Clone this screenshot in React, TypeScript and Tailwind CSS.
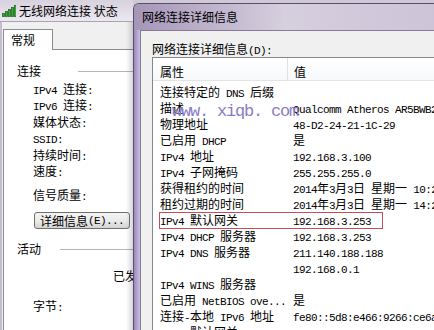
import React from "react";

type Row = [string, string];

const rows: Row[] = [
  ["连接特定的 DNS 后缀", ""],
  ["描述", "Qualcomm Atheros AR5BWB222 Wireless Network Adapter"],
  ["物理地址", "48-D2-24-21-1C-29"],
  ["已启用 DHCP", "是"],
  ["IPv4 地址", "192.168.3.100"],
  ["IPv4 子网掩码", "255.255.255.0"],
  ["获得租约的时间", "2014年3月3日 星期一 10:22:15"],
  ["租约过期的时间", "2014年3月3日 星期一 14:22:15"],
  ["IPv4 默认网关", "192.168.3.253"],
  ["IPv4 DHCP 服务器", "192.168.3.253"],
  ["IPv4 DNS 服务器", "211.140.188.188"],
  ["", "192.168.0.1"],
  ["IPv4 WINS 服务器", ""],
  ["已启用 NetBIOS ove...", "是"],
  ["连接-本地 IPv6 地址", "fe80::5d8:e466:9266:ce6a%11"],
  ["IPv6 默认网关", ""],
];

// ascii runs get a half-width mono face, like SimSun's latin glyphs
function Mix({ text }: { text: string }) {
  const parts = text.match(/[\x00-\x7f]+|[^\x00-\x7f]+/g) ?? [];
  return (
    <>
      {parts.map((p, i) =>
        /^[\x00-\x7f]/.test(p) ? (
          <span
            key={i}
            className="font-['Liberation_Mono',monospace] text-[11px] tracking-[-0.6px]"
          >
            {p}
          </span>
        ) : (
          <span key={i}>{p}</span>
        ),
      )}
    </>
  );
}

function Signal() {
  return (
    <svg width="14" height="13" viewBox="0 0 14 13">
      {[0, 1, 2, 3, 4].map((i) => (
        <rect
          key={i}
          x={i * 3 + 0.5}
          y={12.5 - (i * 2 + 3)}
          width="2"
          height={i * 2 + 3}
          fill="#3aa83a"
          stroke="#1d6a1d"
          strokeWidth="0.8"
        />
      ))}
    </svg>
  );
}

function LeftWindow() {
  return (
    <div className="relative flex w-[133px] shrink-0 flex-col overflow-hidden">
      <div className="flex h-[22px] items-center gap-[3px] border-b border-[#a8a2b2] bg-gradient-to-b from-[#d8d1de] to-[#ece8f0] pl-[2px]">
        <Signal />
        <span className="whitespace-nowrap text-[12px] leading-4 text-black">
          无线网络连接 状态
        </span>
      </div>
      <div className="flex flex-1 flex-col border-l-2 border-[#c4bccf] bg-[#f0f0f0] pt-[7px]">
        <div className="relative z-10 -mb-px ml-px flex h-[21px] w-[50px] items-center border border-b-0 border-[#898c95] bg-white pl-[7px] text-[12px] leading-4">
          常规
        </div>
        <div className="ml-px flex flex-1 flex-col border-l border-t border-[#898c95] bg-white text-[12px] leading-4 text-black">
          <div className="mt-[13px] flex h-4 items-center pl-[13px]">
            <span>连接</span>
            <div className="ml-[37px] h-px flex-1 bg-[#b4b4b4]" />
          </div>
          <div className="mt-[2px] h-4 whitespace-pre pl-[29px]">
            <Mix text="IPv4 连接:" />
          </div>
          <div className="h-4 whitespace-pre pl-[29px]">
            <Mix text="IPv6 连接:" />
          </div>
          <div className="mt-px h-4 whitespace-pre pl-[29px]">
            <Mix text="媒体状态:" />
          </div>
          <div className="h-4 whitespace-pre pl-[29px]">
            <Mix text="SSID:" />
          </div>
          <div className="mt-px h-4 whitespace-pre pl-[29px]">
            <Mix text="持续时间:" />
          </div>
          <div className="h-4 whitespace-pre pl-[29px]">
            <Mix text="速度:" />
          </div>
          <div className="mt-[8px] h-4 whitespace-pre pl-[29px]">
            <Mix text="信号质量:" />
          </div>
          <div className="ml-[30px] mt-[9px] flex h-[17px] w-[96px] items-center justify-center whitespace-pre rounded-[3px] border border-[#707070] bg-gradient-to-b from-[#f4f4f4] via-[#ebebeb] to-[#d4d4d4]">
            <Mix text="详细信息(E)..." />
          </div>
          <div className="mt-[12px] flex h-4 items-center pl-[13px]">
            <span>活动</span>
            <div className="ml-[19px] h-px flex-1 bg-[#b4b4b4]" />
          </div>
          <div className="mt-[11px] h-4 whitespace-nowrap pl-[109px]">已发送</div>
          <div className="mt-[14px] h-4 whitespace-pre pl-[29px]">
            <Mix text="字节:" />
          </div>
        </div>
      </div>
      <div className="absolute bottom-0 right-0 top-[22px] w-[7px] bg-gradient-to-r from-transparent to-[rgba(60,48,80,0.2)]" />
    </div>
  );
}

function DetailsWindow() {
  return (
    <div className="mt-[3px] flex min-w-0 flex-1 flex-col overflow-hidden rounded-tl-[6px] border-l border-t border-[#5a4e6c]">
      <div className="flex h-[26px] shrink-0 items-center bg-gradient-to-r from-[#a596b8] via-[#d6cfde] to-[#cdc4d8] pl-[8px]">
        <span className="whitespace-nowrap text-[12px] leading-4 text-black">
          网络连接详细信息
        </span>
      </div>
      <div className="flex flex-1">
        <div className="w-[6px] shrink-0 bg-gradient-to-r from-[#9a88bc] to-[#cbbfe0]" />
        <div className="flex min-w-0 flex-1 flex-col border-l border-t border-[#857b94] bg-[#f0f0f0] pl-[11px] pt-[10px]">
          <div className="h-4 whitespace-pre text-[12px] leading-4">
            <Mix text="网络连接详细信息(D):" />
          </div>
          <div className="relative flex-1 overflow-hidden border-l border-t border-[#828790] bg-white text-[12px] leading-4 text-black">
            <div className="flex h-[23px] border-b border-[#e2e3e6] bg-gradient-to-b from-white to-[#f7f8fa]">
              <div className="w-[135px] shrink-0 border-r border-[#e0e1e4] pl-[7px] pt-[6px]">属性</div>
              <div className="pl-[6px] pt-[6px]">值</div>
            </div>
            <div className="pt-[3px]">
              {rows.map(([k, v], i) => (
                <div key={i} className="flex h-4 whitespace-pre">
                  <div className="w-[135px] shrink-0 overflow-hidden pl-[7px]">
                    <Mix text={k} />
                  </div>
                  <div className="pl-[5px]">
                    <Mix text={v} />
                  </div>
                </div>
              ))}
            </div>
            <div className="pointer-events-none absolute left-[6px] top-[154px] h-[17px] w-[224px] border-[1.5px] border-[#c0505c]" />
            <div className="pointer-events-none absolute left-[19px] top-[45px] whitespace-pre font-['Liberation_Mono',monospace] text-[17px] leading-none tracking-[-1.2px] text-[#8a7cc4]">
              www. xiqb. com
            </div>
          </div>
        </div>
      </div>
    </div>
  );
}

export default function App() {
  return (
    <div className="flex h-[330px] w-[434px] overflow-hidden bg-[#cfc8d6] font-['Noto_Sans_CJK_SC','Noto_Sans',sans-serif]">
      <LeftWindow />
      <DetailsWindow />
    </div>
  );
}
